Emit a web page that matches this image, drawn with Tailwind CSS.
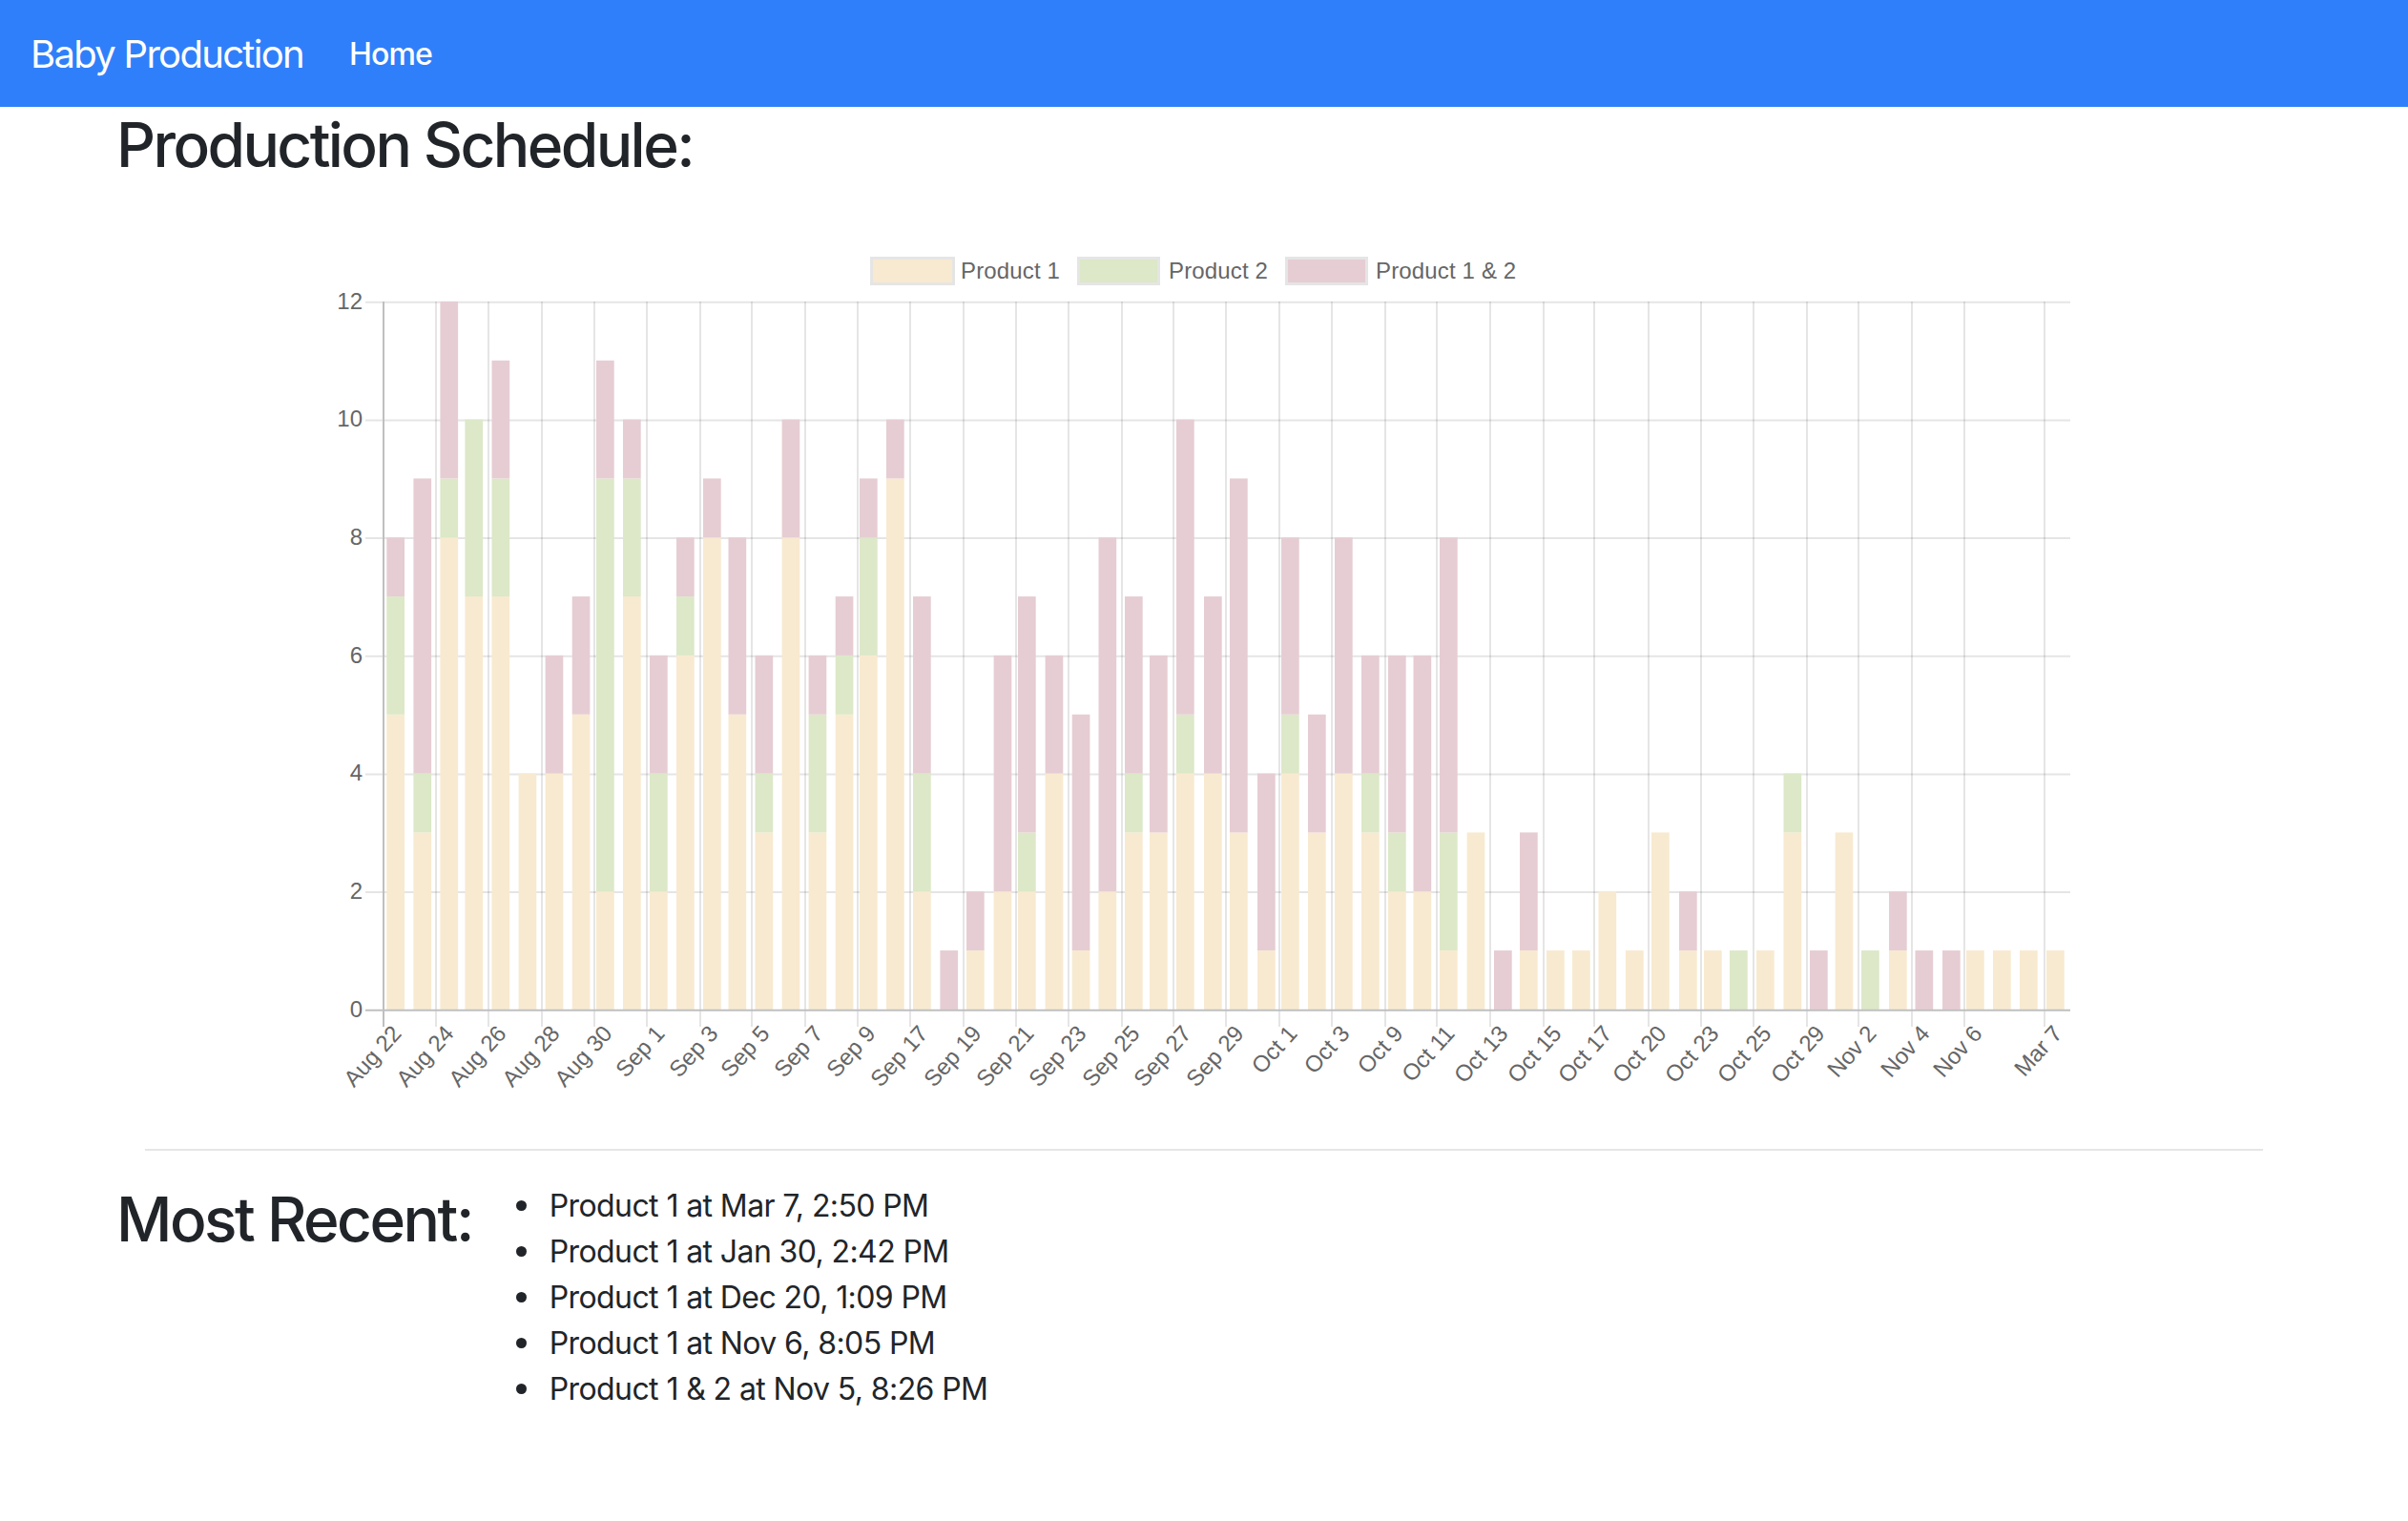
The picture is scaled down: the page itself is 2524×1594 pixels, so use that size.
<!doctype html>
<html lang="en">
<head>
<meta charset="utf-8">
<title>Baby Production</title>
<script src="https://cdn.jsdelivr.net/npm/@tailwindcss/browser@4"></script>
</head>
<body class="bg-white text-[#212529] font-['Inter','Noto_Sans',sans-serif]">
<nav class="h-[112px] bg-[#307ffa] flex items-center pl-[32px] pt-[2px] text-white">
  <a class="text-[40px] leading-[60px] tracking-[-1.7px] mr-[48px]">Baby Production</a>
  <a class="text-[32px] leading-[48px] font-medium tracking-[-0.8px]">Home</a>
</nav>
<main>
  <h2 class="pl-[122px] pt-[1px] text-[64px] leading-[77px] font-medium tracking-[-2.6px]">Production Schedule:</h2>
  <svg id="chart" class="block mt-[60px] w-[2524px] h-[954px] font-['Liberation_Sans',Arial,sans-serif]" viewBox="0 250 2524 954" xmlns="http://www.w3.org/2000/svg">
    <g id="legend" class="text-[24px] fill-[#666666] tracking-[0.15px]">
      <rect x="913.5" y="270.5" width="86" height="27" class="fill-[#f8ead0] stroke-[#e5e5e5] stroke-[3px]"/>
      <text x="1007" y="292">Product 1</text>
      <rect x="1130.5" y="270.5" width="84" height="27" class="fill-[#dce8c8] stroke-[#e5e5e5] stroke-[3px]"/>
      <text x="1225" y="292">Product 2</text>
      <rect x="1348.5" y="270.5" width="84" height="27" class="fill-[#e6cdd3] stroke-[#e5e5e5] stroke-[3px]"/>
      <text x="1442" y="292">Product 1 &amp; 2</text>
    </g>
    <g id="grid"></g>
    <g id="bars"></g>
    <g id="axes"></g>
    <g id="ylabels" class="text-[24px] fill-[#666666]"></g>
    <g id="xlabels" class="text-[24px] fill-[#666666]"></g>
  </svg>
  <hr class="mx-[152px] h-[2px] border-0 bg-[#e6e6e6]">
  <section class="flex items-start pl-[122px] pt-[33px]">
    <h2 class="text-[64px] leading-[77px] font-medium tracking-[-2.5px] mr-[1px]">Most Recent:</h2>
    <ul class="list-none pl-[80px] pt-[1px] text-[32px] leading-[48px] tracking-[-0.6px]">
      <li class="relative before:absolute before:left-[-35px] before:top-[18px] before:size-[11px] before:rounded-full before:bg-[#212529] before:content-['']">Product 1 at Mar 7, 2:50 PM</li>
      <li class="relative before:absolute before:left-[-35px] before:top-[18px] before:size-[11px] before:rounded-full before:bg-[#212529] before:content-['']">Product 1 at Jan 30, 2:42 PM</li>
      <li class="relative before:absolute before:left-[-35px] before:top-[18px] before:size-[11px] before:rounded-full before:bg-[#212529] before:content-['']">Product 1 at Dec 20, 1:09 PM</li>
      <li class="relative before:absolute before:left-[-35px] before:top-[18px] before:size-[11px] before:rounded-full before:bg-[#212529] before:content-['']">Product 1 at Nov 6, 8:05 PM</li>
      <li class="relative before:absolute before:left-[-35px] before:top-[18px] before:size-[11px] before:rounded-full before:bg-[#212529] before:content-['']">Product 1 &amp; 2 at Nov 5, 8:26 PM</li>
    </ul>
  </section>
</main>
<script>
const NS = 'http://www.w3.org/2000/svg';
const Y0 = 1058.7, UNIT = 61.83, LEFT = 402, RIGHT = 2170, W = 18.7, BAR_LIFT = 0.8;
const series = ['fill-[#f8ead0]', 'fill-[#dce8c8]', 'fill-[#e6cdd3]'];
const lefts = [405.3,433.4,461.4,487.4,515.5,543.6,571.6,599.7,625,653,681,709,737,763.5,791.5,819.6,847.6,875.7,901,929,957,985.4,1013,1041.6,1067,1095.6,1123.7,1151.5,1179,1205,1233,1262,1289,1318,1343,1371,1399,1427,1455,1481.5,1509,1537.6,1566,1593,1621,1648,1675.5,1704,1731,1760,1786,1813,1841,1869.5,1897,1923.6,1951,1980,2007.5,2036,2061,2089,2117,2145];
const data = [[5,2,1],[3,1,5],[8,1,3],[7,3,0],[7,2,2],[4,0,0],[4,0,2],[5,0,2],[2,7,2],[7,2,1],[2,2,2],[6,1,1],[8,0,1],[5,0,3],[3,1,2],[8,0,2],[3,2,1],[5,1,1],[6,2,1],[9,0,1],[2,2,3],[0,0,1],[1,0,1],[2,0,4],[2,1,4],[4,0,2],[1,0,4],[2,0,6],[3,1,3],[3,0,3],[4,1,5],[4,0,3],[3,0,6],[1,0,3],[4,1,3],[3,0,2],[4,0,4],[3,1,2],[2,1,3],[2,0,4],[1,2,5],[3,0,0],[0,0,1],[1,0,2],[1,0,0],[1,0,0],[2,0,0],[1,0,0],[3,0,0],[1,0,1],[1,0,0],[0,1,0],[1,0,0],[3,1,0],[0,0,1],[3,0,0],[0,1,0],[1,0,1],[0,0,1],[0,0,1],[1,0,0],[1,0,0],[1,0,0],[1,0,0]];
const ticks = [[402,'Aug 22'],[457,'Aug 24'],[512,'Aug 26'],[568,'Aug 28'],[623,'Aug 30'],[678,'Sep 1'],[734,'Sep 3'],[788,'Sep 5'],[844,'Sep 7'],[899,'Sep 9'],[954,'Sep 17'],[1010,'Sep 19'],[1065,'Sep 21'],[1120,'Sep 23'],[1176,'Sep 25'],[1230,'Sep 27'],[1285,'Sep 29'],[1341,'Oct 1'],[1396,'Oct 3'],[1452,'Oct 9'],[1506,'Oct 11'],[1562,'Oct 13'],[1618,'Oct 15'],[1671,'Oct 17'],[1728,'Oct 20'],[1783,'Oct 23'],[1838,'Oct 25'],[1894,'Oct 29'],[1948,'Nov 2'],[2004,'Nov 4'],[2059,'Nov 6'],[2143,'Mar 7']];
function el(tag, attrs, parent, cls, text) {
  const n = document.createElementNS(NS, tag);
  for (const k in attrs) n.setAttribute(k, attrs[k]);
  if (cls) n.setAttribute('class', cls);
  if (text != null) n.textContent = text;
  document.getElementById(parent).appendChild(n);
}
const gridCls = 'stroke-black/10 stroke-[2px]';
for (let v = 2; v <= 12; v += 2) {
  const y = Y0 - v * UNIT;
  el('line', {x1: 383, x2: RIGHT, y1: y, y2: y}, 'grid', gridCls);
}
ticks.slice(1).forEach(([x]) => el('line', {x1: x, x2: x, y1: 316, y2: 1076}, 'grid', gridCls));
data.forEach((d, i) => {
  let base = 0;
  d.forEach((v, s) => {
    if (!v) return;
    el('rect', {x: lefts[i], width: W, y: Y0 - BAR_LIFT - (base + v) * UNIT, height: v * UNIT}, 'bars', series[s]);
    base += v;
  });
});
const axisCls = 'stroke-[#bfbfbf] stroke-[2px]';
el('line', {x1: LEFT, x2: LEFT, y1: 316, y2: 1076}, 'axes', axisCls);
el('line', {x1: 383, x2: RIGHT, y1: Y0, y2: Y0}, 'axes', axisCls);
for (let v = 0; v <= 12; v += 2) {
  el('text', {x: 380, y: Y0 - v * UNIT + 7, 'text-anchor': 'end'}, 'ylabels', '', v);
}
ticks.forEach(([x, t]) => {
  el('text', {x: x + 20, y: 1084, 'text-anchor': 'end', transform: 'rotate(-48 ' + (x + 20) + ' 1084)'}, 'xlabels', '', t);
});
</script>
</body>
</html>
